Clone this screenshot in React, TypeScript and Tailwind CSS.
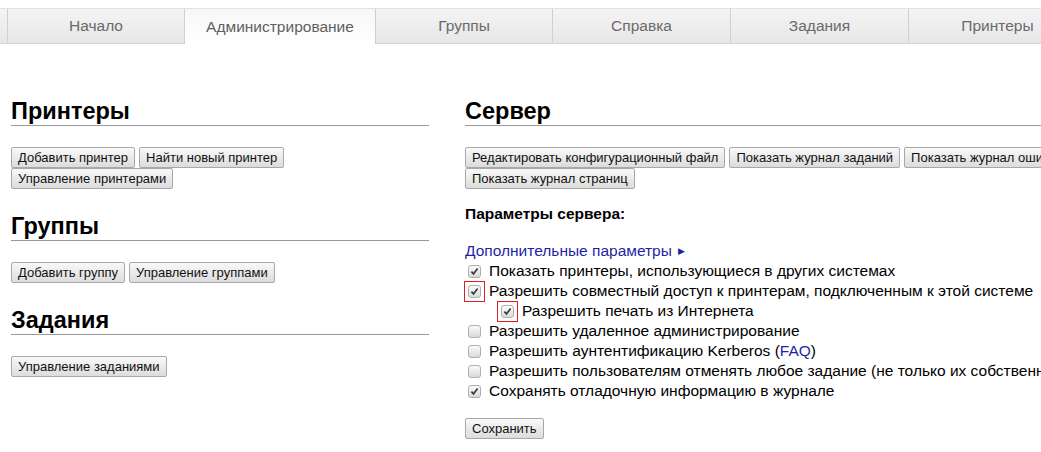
import type { ReactNode } from 'react';

const tabs = [
  { label: 'Начало', w: 'w-[177px]' },
  { label: 'Администрирование', w: 'w-[191px]', active: true },
  { label: 'Группы', w: 'w-[177px]' },
  { label: 'Справка', w: 'w-[178px]' },
  { label: 'Задания', w: 'w-[178px]' },
  { label: 'Принтеры', w: 'w-[178px]' },
];

function Tabs() {
  return (
    <div className="mt-2 flex h-[36px] border-y border-t-[#e2e2e2] border-b-[#d2d2d2] bg-gradient-to-b from-[#f4f4f4] to-[#e7e7e7]">
      <div className="w-[8px] shrink-0 border-r border-[#d0d0d0]" />
      {tabs.map((t) =>
        t.active ? (
          <div
            key={t.label}
            className={`${t.w} -mb-px flex shrink-0 items-center justify-center border-r border-[#cfcfcf] bg-gradient-to-b from-[#f7f7f7] to-white text-[15.5px] text-[#606060]`}
          >
            {t.label}
          </div>
        ) : (
          <div
            key={t.label}
            className={`${t.w} flex shrink-0 items-center justify-center border-r border-[#d0d0d0] text-[15.5px] text-[#6a6a6a]`}
          >
            {t.label}
          </div>
        ),
      )}
    </div>
  );
}

function Btn({ children }: { children: ReactNode }) {
  return (
    <button className="h-[21px] rounded-[2px] border border-[#a8a8a8] bg-gradient-to-b from-[#f9f9f9] to-[#dcdcdc] px-[6px] text-[13px] leading-[15px] whitespace-nowrap text-[#111]">
      {children}
    </button>
  );
}

function Heading({ children }: { children: ReactNode }) {
  return (
    <h2 className="border-b border-[#9a9a9a] pb-px text-[23.5px] leading-[26px] font-bold text-black">
      {children}
    </h2>
  );
}

function Box({ checked }: { checked?: boolean }) {
  return (
    <span className="inline-flex h-[13px] w-[13px] shrink-0 items-center justify-center rounded-[3px] border border-[#b0b0b0] bg-gradient-to-b from-[#fbfbfb] to-[#dadada]">
      {checked && (
        <svg width="9" height="9" viewBox="0 0 9 9">
          <path d="M1.4 4.6 L3.5 6.9 L7.6 1.6" fill="none" stroke="#3a3a3a" strokeWidth="1.7" />
        </svg>
      )}
    </span>
  );
}

function Option({ checked, children }: { checked?: boolean; children: ReactNode }) {
  return (
    <div className="flex h-5 items-center whitespace-nowrap">
      <span className="mr-2 ml-[3px] flex">
        <Box checked={checked} />
      </span>
      {children}
    </div>
  );
}

export default function App() {
  return (
    <div className="h-[452px] w-[1041px] overflow-hidden bg-white font-['Liberation_Sans',Arial,sans-serif] text-black">
      <Tabs />

      <div className="flex pl-[11px]">
        {/* left column */}
        <div className="w-[418px] shrink-0 pt-[54px]">
          <Heading>Принтеры</Heading>
          <div className="mt-[21px] flex flex-wrap gap-x-[4px]">
            <Btn>Добавить принтер</Btn>
            <Btn>Найти новый принтер</Btn>
            <Btn>Управление принтерами</Btn>
          </div>

          <div className="mt-[24px]">
            <Heading>Группы</Heading>
          </div>
          <div className="mt-[21px] flex flex-wrap gap-x-[4px]">
            <Btn>Добавить группу</Btn>
            <Btn>Управление группами</Btn>
          </div>

          <div className="mt-[24px]">
            <Heading>Задания</Heading>
          </div>
          <div className="mt-[21px] flex flex-wrap gap-x-[4px]">
            <Btn>Управление заданиями</Btn>
          </div>
        </div>

        {/* right column */}
        <div className="ml-[36px] w-[700px] shrink-0 pt-[54px]">
          <Heading>Сервер</Heading>
          <div className="mt-[21px] flex flex-wrap gap-x-[4px]">
            <Btn>Редактировать конфигурационный файл</Btn>
            <Btn>Показать журнал заданий</Btn>
            <Btn>Показать журнал ошибок</Btn>
            <Btn>Показать журнал страниц</Btn>
          </div>

          <div className="mt-[15px] text-[15.5px] leading-5 font-bold">Параметры сервера:</div>

          <div className="mt-[17px] text-[15.5px] leading-5">
            <div className="flex h-5 items-center text-[#1f1fa6]">
              Дополнительные параметры
              <span className="ml-[6px] text-[9px]">▶</span>
            </div>
            <Option checked>Показать принтеры, использующиеся в других системах</Option>
            <div className="flex h-5 items-center whitespace-nowrap">
              <span className="mr-[4px] -ml-px flex border border-[#e02020] p-[3px]">
                <Box checked />
              </span>
              Разрешить совместный доступ к принтерам, подключенным к этой системе
            </div>
            <div className="flex h-5 items-center whitespace-nowrap">
              <span className="mr-[4px] ml-[32px] flex border border-[#e02020] p-[3px]">
                <Box checked />
              </span>
              Разрешить печать из Интернета
            </div>
            <Option>Разрешить удаленное администрирование</Option>
            <Option>
              Разрешить аунтентификацию Kerberos (<span className="text-[#1f1fa6]">FAQ</span>)
            </Option>
            <Option>Разрешить пользователям отменять любое задание (не только их собственные)</Option>
            <Option checked>Сохранять отладочную информацию в журнале</Option>
          </div>

          <div className="mt-[15px]">
            <Btn>Сохранить</Btn>
          </div>
        </div>
      </div>
    </div>
  );
}
